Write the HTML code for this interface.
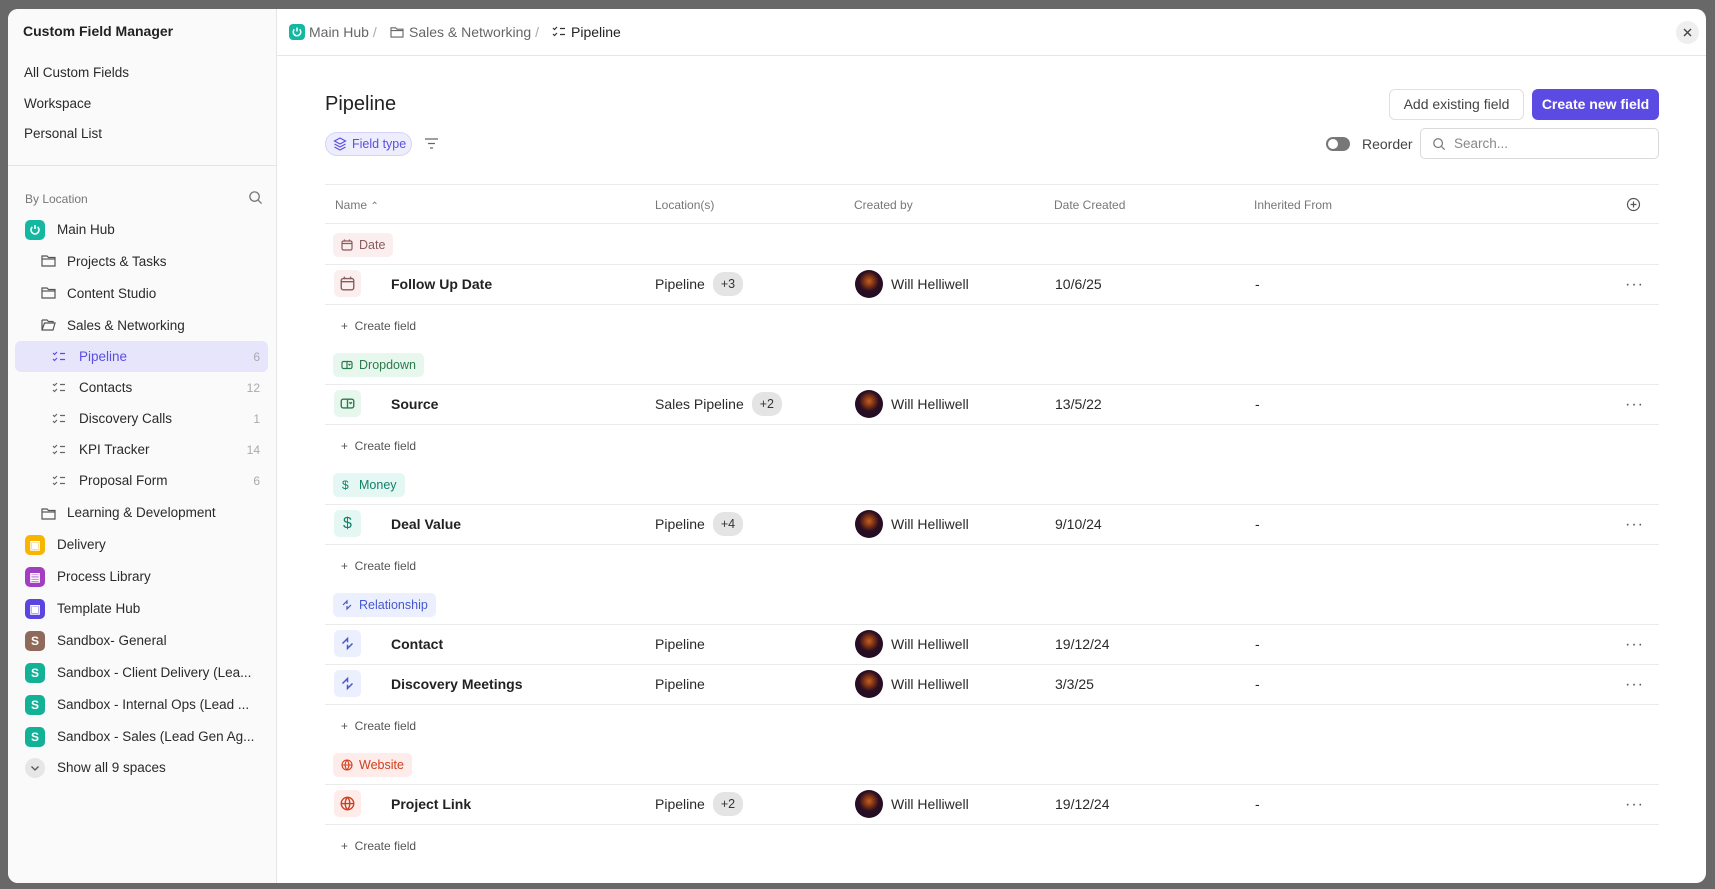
<!DOCTYPE html>
<html><head><meta charset="utf-8">
<style>
*{box-sizing:border-box;margin:0;padding:0}
body{width:1715px;height:889px;background:#686868;font-family:"Liberation Sans",sans-serif;color:#2a2a2a;position:relative;overflow:hidden;font-size:14px}
.modal{position:absolute;left:8px;top:9px;width:1698px;height:874px;background:#fff;border-radius:10px;overflow:hidden}
.side{position:absolute;left:0;top:0;width:269px;height:874px;background:#fafafa;border-right:1px solid #e6e6e6}
.a{position:absolute;white-space:nowrap}
.si{position:absolute;white-space:nowrap;line-height:20px;font-size:13.5px;color:#2a2a2a}
.cnt{position:absolute;right:16px;font-size:12px;color:#aaa;line-height:20px}
.sq{position:absolute;width:20px;height:20px;border-radius:5px;color:#fff;font-weight:bold;font-size:12px;text-align:center;line-height:20px}
.hl{position:absolute;border-top:1px solid #ebebeb;left:317px;width:1334px}
.th{position:absolute;font-size:12px;color:#777;line-height:16px}
.tag{position:absolute;left:325px;height:24px;border-radius:5px;font-size:12.5px;line-height:24px;padding:0 8px 0 26px}
.tag svg{position:absolute;left:8px;top:6px}
.ib{position:absolute;left:326px;width:27px;height:27px;border-radius:5px}
.ib svg{position:absolute;left:6px;top:6px}
.nm{position:absolute;left:383px;font-weight:bold;font-size:14px;line-height:20px;color:#222}
.tx{position:absolute;font-size:14px;line-height:20px;color:#2a2a2a}
.tp{position:absolute;font-size:14px;height:24px;display:flex;align-items:center;color:#2a2a2a;white-space:nowrap}
.pill{display:inline-block;background:#e4e4e4;border-radius:11px;height:24px;line-height:24px;padding:0 8px;font-size:12.5px;margin-left:8px;color:#333}
.av{position:absolute;left:847px;width:28px;height:28px;border-radius:50%;background:radial-gradient(circle at 50% 40%,#c0602a 0,#7a3010 25%,#2a0f25 45%,#1b0a1e 100%)}
.dots{position:absolute;left:1617px;font-size:16px;color:#555;letter-spacing:1px;line-height:20px}
.cf{position:absolute;left:333px;font-size:12px;color:#555;line-height:16px}
</style></head><body>
<div class="modal">
<div class="side">
  <div class="a" style="left:15px;top:14px;font-size:14px;font-weight:bold;color:#222">Custom Field Manager</div>
  <div class="si" style="left:16px;top:54px">All Custom Fields</div>
  <div class="si" style="left:16px;top:85px">Workspace</div>
  <div class="si" style="left:16px;top:115px">Personal List</div>
  <div style="position:absolute;left:0;top:156px;width:269px;border-top:1px solid #e3e3e3"></div>
  <div class="a" style="left:17px;top:183px;font-size:12px;color:#777">By Location</div>
  <svg style="position:absolute;left:240px;top:181px" width="15" height="15" viewBox="0 0 16 16" fill="none" stroke="#777" stroke-width="1.4"><circle cx="7" cy="7" r="5"/><path d="M11 11l3.5 3.5"/></svg>
  <div class="sq" style="left:17px;top:211px;background:#14b8a0"><svg width="12" height="12" viewBox="0 0 12 12" fill="none" stroke="#fff" stroke-width="1.6" style="margin-top:4px"><path d="M6 1v4"/><path d="M3.3 3a4 4 0 1 0 5.4 0"/></svg></div>
  <div class="si" style="left:49px;top:211px">Main Hub</div>
  <svg style="position:absolute;left:33px;top:245px" width="15" height="13" viewBox="0 0 15 13" fill="none" stroke="#555" stroke-width="1.2"><path d="M1 2h5l1.5 1.5H14V12H1z"/><path d="M1 5h13"/></svg>
  <div class="si" style="left:59px;top:243px">Projects &amp; Tasks</div>
  <svg style="position:absolute;left:33px;top:277px" width="15" height="13" viewBox="0 0 15 13" fill="none" stroke="#555" stroke-width="1.2"><path d="M1 2h5l1.5 1.5H14V12H1z"/><path d="M1 5h13"/></svg>
  <div class="si" style="left:59px;top:275px">Content Studio</div>
  <svg style="position:absolute;left:33px;top:309px" width="15" height="13" viewBox="0 0 15 13" fill="none" stroke="#555" stroke-width="1.2"><path d="M1 2h5l1.5 1.5H12V5"/><path d="M1 2v10h11l2-7H3.5L1 12"/></svg>
  <div class="si" style="left:59px;top:307px">Sales &amp; Networking</div>
  <div style="position:absolute;left:7px;top:332px;width:253px;height:31px;background:#e6e5fc;border-radius:6px"></div>
  <svg style="position:absolute;left:44px;top:342px" width="14" height="12" viewBox="0 0 14 12" fill="none" stroke="#5b4fe0" stroke-width="1.2"><path d="M1 2l1.5 1.5L5 1M1 8l1.5 1.5L5 7M8 2.5h5M8 8.5h5"/></svg>
  <div class="si" style="left:71px;top:338px;color:#5b4fe0">Pipeline</div><div class="cnt" style="top:338px;right:16px">6</div>
  <svg style="position:absolute;left:44px;top:373px" width="14" height="12" viewBox="0 0 14 12" fill="none" stroke="#666" stroke-width="1.2"><path d="M1 2l1.5 1.5L5 1M1 8l1.5 1.5L5 7M8 2.5h5M8 8.5h5"/></svg>
  <div class="si" style="left:71px;top:369px">Contacts</div><div class="cnt" style="top:369px">12</div>
  <svg style="position:absolute;left:44px;top:404px" width="14" height="12" viewBox="0 0 14 12" fill="none" stroke="#666" stroke-width="1.2"><path d="M1 2l1.5 1.5L5 1M1 8l1.5 1.5L5 7M8 2.5h5M8 8.5h5"/></svg>
  <div class="si" style="left:71px;top:400px">Discovery Calls</div><div class="cnt" style="top:400px">1</div>
  <svg style="position:absolute;left:44px;top:435px" width="14" height="12" viewBox="0 0 14 12" fill="none" stroke="#666" stroke-width="1.2"><path d="M1 2l1.5 1.5L5 1M1 8l1.5 1.5L5 7M8 2.5h5M8 8.5h5"/></svg>
  <div class="si" style="left:71px;top:431px">KPI Tracker</div><div class="cnt" style="top:431px">14</div>
  <svg style="position:absolute;left:44px;top:466px" width="14" height="12" viewBox="0 0 14 12" fill="none" stroke="#666" stroke-width="1.2"><path d="M1 2l1.5 1.5L5 1M1 8l1.5 1.5L5 7M8 2.5h5M8 8.5h5"/></svg>
  <div class="si" style="left:71px;top:462px">Proposal Form</div><div class="cnt" style="top:462px">6</div>
  <svg style="position:absolute;left:33px;top:498px" width="15" height="13" viewBox="0 0 15 13" fill="none" stroke="#555" stroke-width="1.2"><path d="M1 2h5l1.5 1.5H14V12H1z"/><path d="M1 5h13"/></svg>
  <div class="si" style="left:59px;top:494px">Learning &amp; Development</div>
  <div class="sq" style="left:17px;top:526px;background:#f7b500">▣</div><div class="si" style="left:49px;top:526px">Delivery</div>
  <div class="sq" style="left:17px;top:558px;background:#a23fc0">▤</div><div class="si" style="left:49px;top:558px">Process Library</div>
  <div class="sq" style="left:17px;top:590px;background:#5a45e0">▣</div><div class="si" style="left:49px;top:590px">Template Hub</div>
  <div class="sq" style="left:17px;top:622px;background:#8f6a5a">S</div><div class="si" style="left:49px;top:622px">Sandbox- General</div>
  <div class="sq" style="left:17px;top:654px;background:#13b195">S</div><div class="si" style="left:49px;top:654px">Sandbox - Client Delivery (Lea...</div>
  <div class="sq" style="left:17px;top:686px;background:#13b195">S</div><div class="si" style="left:49px;top:686px">Sandbox - Internal Ops (Lead ...</div>
  <div class="sq" style="left:17px;top:718px;background:#13b195">S</div><div class="si" style="left:49px;top:718px">Sandbox - Sales (Lead Gen Ag...</div>
  <div style="position:absolute;left:17px;top:749px;width:20px;height:20px;border-radius:50%;background:#e6e6e6"><svg width="20" height="20" viewBox="0 0 20 20" fill="none" stroke="#555" stroke-width="1.3"><path d="M6.5 8.5l3.5 3.5 3.5-3.5"/></svg></div>
  <div class="si" style="left:49px;top:749px">Show all 9 spaces</div>
</div>

<div style="position:absolute;left:269px;top:46px;width:1429px;border-top:1px solid #e6e6e6"></div>
<div style="position:absolute;left:281px;top:15px;width:16px;height:16px;border-radius:4px;background:#14b8a0"><svg width="16" height="16" viewBox="0 0 16 16" fill="none" stroke="#fff" stroke-width="1.5"><path d="M8 3.5v4"/><path d="M5.3 5.3a3.8 3.8 0 1 0 5.4 0"/></svg></div>
<div class="a" style="left:301px;top:14px;font-size:14px;color:#666;line-height:18px">Main Hub <span style="color:#aaa">/</span></div>
<svg style="position:absolute;left:382px;top:17px" width="14" height="12" viewBox="0 0 15 13" fill="none" stroke="#666" stroke-width="1.2"><path d="M1 2h5l1.5 1.5H14V12H1z"/><path d="M1 5h13"/></svg>
<div class="a" style="left:401px;top:14px;font-size:14px;color:#666;line-height:18px">Sales &amp; Networking <span style="color:#aaa">/</span></div>
<svg style="position:absolute;left:544px;top:17px" width="14" height="12" viewBox="0 0 14 12" fill="none" stroke="#333" stroke-width="1.2"><path d="M1 2l1.5 1.5L5 1M1 8l1.5 1.5L5 7M8 2.5h5M8 8.5h5"/></svg>
<div class="a" style="left:563px;top:14px;font-size:14px;color:#222;line-height:18px">Pipeline</div>
<div style="position:absolute;left:1668px;top:12px;width:23px;height:23px;border-radius:50%;background:#efefef"><svg width="23" height="23" viewBox="0 0 23 23" stroke="#444" stroke-width="1.4"><path d="M8 8l7 7M15 8l-7 7"/></svg></div>

<div class="a" style="left:317px;top:84px;font-size:20px;color:#222">Pipeline</div>
<div style="position:absolute;left:317px;top:123px;width:87px;height:24px;border-radius:12px;background:#eeedfd;border:1px solid #d6d3fa"></div>
<svg style="position:absolute;left:325px;top:128px" width="14" height="14" viewBox="0 0 14 14" fill="none" stroke="#5b4fe0" stroke-width="1.2"><path d="M7 1L1.5 4 7 7l5.5-3z"/><path d="M1.5 7L7 10l5.5-3M1.5 10L7 13l5.5-3"/></svg>
<div class="a" style="left:344px;top:128px;font-size:12.5px;color:#5b4fe0;line-height:15px">Field type</div>
<svg style="position:absolute;left:416px;top:128px" width="15" height="13" viewBox="0 0 15 13" stroke="#666" stroke-width="1.3"><path d="M1 2h13M4 6.5h7M6 11h3"/></svg>

<div style="position:absolute;left:1381px;top:80px;width:135px;height:31px;border:1px solid #e0e0e0;border-radius:6px;font-size:14px;color:#444;text-align:center;line-height:29px">Add existing field</div>
<div style="position:absolute;left:1524px;top:80px;width:127px;height:31px;background:#5b4be3;border-radius:6px;font-size:14px;color:#fff;font-weight:bold;text-align:center;line-height:31px">Create new field</div>
<div style="position:absolute;left:1318px;top:128px;width:24px;height:14px;border-radius:7px;background:#777"><div style="position:absolute;left:2px;top:2px;width:10px;height:10px;border-radius:50%;background:#fff"></div></div>
<div class="a" style="left:1354px;top:126px;font-size:14px;color:#444;line-height:18px">Reorder</div>
<div style="position:absolute;left:1412px;top:119px;width:239px;height:31px;border:1px solid #d9d9d9;border-radius:5px"></div>
<svg style="position:absolute;left:1424px;top:128px" width="14" height="14" viewBox="0 0 16 16" fill="none" stroke="#777" stroke-width="1.4"><circle cx="7" cy="7" r="5"/><path d="M11 11l3.5 3.5"/></svg>
<div class="a" style="left:1446px;top:126px;font-size:13.5px;color:#888;line-height:18px">Search...</div>

<div class="hl" style="top:175px"></div>
<div class="th" style="left:327px;top:188px">Name <span style="font-size:10px">⌃</span></div>
<div class="th" style="left:647px;top:188px">Location(s)</div>
<div class="th" style="left:846px;top:188px">Created by</div>
<div class="th" style="left:1046px;top:188px">Date Created</div>
<div class="th" style="left:1246px;top:188px">Inherited From</div>
<svg style="position:absolute;left:1618px;top:188px" width="15" height="15" viewBox="0 0 15 15" fill="none" stroke="#555" stroke-width="1.2"><circle cx="7.5" cy="7.5" r="6"/><path d="M7.5 4.5v6M4.5 7.5h6"/></svg>
<div class="hl" style="top:214px"></div>

<div class="tag" style="top:224px;background:#fbeeee;color:#8a5b5b"><svg width="12" height="12" viewBox="0 0 12 12" fill="none" stroke="#8a5b5b" stroke-width="1.2"><rect x="1" y="2" width="10" height="9" rx="1.5"/><path d="M3.5 0.5v2M8.5 0.5v2M1 4.5h10"/></svg>Date</div>
<div class="hl" style="top:255px"></div>
<div class="ib" style="top:261px;background:#fbeeee"><svg width="15" height="15" viewBox="0 0 12 12" fill="none" stroke="#8a5b5b" stroke-width="1.1"><rect x="1" y="2" width="10" height="9" rx="1.5"/><path d="M3.5 0.5v2M8.5 0.5v2M1 4.5h10"/></svg></div>
<div class="nm" style="top:265px">Follow Up Date</div>
<div class="tp" style="left:647px;top:263px">Pipeline<span class="pill">+3</span></div>
<div class="av" style="top:261px"></div>
<div class="tx" style="left:883px;top:265px">Will Helliwell</div>
<div class="tx" style="left:1047px;top:265px">10/6/25</div>
<div class="tx" style="left:1247px;top:265px">-</div>
<div class="dots" style="top:266px">···</div>
<div class="hl" style="top:295px"></div>
<div class="cf" style="top:309px">+&nbsp; Create field</div>

<div class="tag" style="top:344px;background:#e8f7ee;color:#2b7a4b"><svg width="12" height="12" viewBox="0 0 12 12" fill="none" stroke="#2b7a4b" stroke-width="1.2"><rect x="1" y="2.5" width="10" height="7" rx="1.5"/><path d="M6 2.5v7M7.5 5l1 1 1-1"/></svg>Dropdown</div>
<div class="hl" style="top:375px"></div>
<div class="ib" style="top:381px;background:#e8f7ee"><svg width="15" height="15" viewBox="0 0 12 12" fill="none" stroke="#2b7a4b" stroke-width="1.1"><rect x="1" y="2.5" width="10" height="7" rx="1.5"/><path d="M6 2.5v7M7.5 5l1 1 1-1"/></svg></div>
<div class="nm" style="top:385px">Source</div>
<div class="tp" style="left:647px;top:383px">Sales Pipeline<span class="pill">+2</span></div>
<div class="av" style="top:381px"></div>
<div class="tx" style="left:883px;top:385px">Will Helliwell</div>
<div class="tx" style="left:1047px;top:385px">13/5/22</div>
<div class="tx" style="left:1247px;top:385px">-</div>
<div class="dots" style="top:386px">···</div>
<div class="hl" style="top:415px"></div>
<div class="cf" style="top:429px">+&nbsp; Create field</div>

<div class="tag" style="top:464px;background:#e5f7f2;color:#13806a"><span style="position:absolute;left:9px;font-size:12px">$</span>Money</div>
<div class="hl" style="top:495px"></div>
<div class="ib" style="top:501px;background:#e5f7f2;color:#13806a;text-align:center;line-height:27px;font-size:16px">$</div>
<div class="nm" style="top:505px">Deal Value</div>
<div class="tp" style="left:647px;top:503px">Pipeline<span class="pill">+4</span></div>
<div class="av" style="top:501px"></div>
<div class="tx" style="left:883px;top:505px">Will Helliwell</div>
<div class="tx" style="left:1047px;top:505px">9/10/24</div>
<div class="tx" style="left:1247px;top:505px">-</div>
<div class="dots" style="top:506px">···</div>
<div class="hl" style="top:535px"></div>
<div class="cf" style="top:549px">+&nbsp; Create field</div>

<div class="tag" style="top:584px;background:#eceffd;color:#4658d0"><svg width="12" height="12" viewBox="0 0 12 12" fill="none" stroke="#4658d0" stroke-width="1.2"><path d="M2 6l4-4v3M10 6l-4 4V7"/></svg>Relationship</div>
<div class="hl" style="top:615px"></div>
<div class="ib" style="top:621px;background:#eceffd"><svg width="15" height="15" viewBox="0 0 12 12" fill="none" stroke="#4658d0" stroke-width="1.2"><path d="M2 6l4-4v3M10 6l-4 4V7"/></svg></div>
<div class="nm" style="top:625px">Contact</div>
<div class="tx" style="left:647px;top:625px">Pipeline</div>
<div class="av" style="top:621px"></div>
<div class="tx" style="left:883px;top:625px">Will Helliwell</div>
<div class="tx" style="left:1047px;top:625px">19/12/24</div>
<div class="tx" style="left:1247px;top:625px">-</div>
<div class="dots" style="top:626px">···</div>
<div class="hl" style="top:655px"></div>
<div class="ib" style="top:661px;background:#eceffd"><svg width="15" height="15" viewBox="0 0 12 12" fill="none" stroke="#4658d0" stroke-width="1.2"><path d="M2 6l4-4v3M10 6l-4 4V7"/></svg></div>
<div class="nm" style="top:665px">Discovery Meetings</div>
<div class="tx" style="left:647px;top:665px">Pipeline</div>
<div class="av" style="top:661px"></div>
<div class="tx" style="left:883px;top:665px">Will Helliwell</div>
<div class="tx" style="left:1047px;top:665px">3/3/25</div>
<div class="tx" style="left:1247px;top:665px">-</div>
<div class="dots" style="top:666px">···</div>
<div class="hl" style="top:695px"></div>
<div class="cf" style="top:709px">+&nbsp; Create field</div>

<div class="tag" style="top:744px;background:#fdecea;color:#cf3f1c"><svg width="12" height="12" viewBox="0 0 12 12" fill="none" stroke="#cf3f1c" stroke-width="1.1"><circle cx="6" cy="6" r="5"/><path d="M1 6h10M6 1c-2.5 3-2.5 7 0 10M6 1c2.5 3 2.5 7 0 10"/></svg>Website</div>
<div class="hl" style="top:775px"></div>
<div class="ib" style="top:781px;background:#fdecea"><svg width="15" height="15" viewBox="0 0 12 12" fill="none" stroke="#cf3f1c" stroke-width="1.1"><circle cx="6" cy="6" r="5"/><path d="M1 6h10M6 1c-2.5 3-2.5 7 0 10M6 1c2.5 3 2.5 7 0 10"/></svg></div>
<div class="nm" style="top:785px">Project Link</div>
<div class="tp" style="left:647px;top:783px">Pipeline<span class="pill">+2</span></div>
<div class="av" style="top:781px"></div>
<div class="tx" style="left:883px;top:785px">Will Helliwell</div>
<div class="tx" style="left:1047px;top:785px">19/12/24</div>
<div class="tx" style="left:1247px;top:785px">-</div>
<div class="dots" style="top:786px">···</div>
<div class="hl" style="top:815px"></div>
<div class="cf" style="top:829px">+&nbsp; Create field</div>
</div>
</body></html>
